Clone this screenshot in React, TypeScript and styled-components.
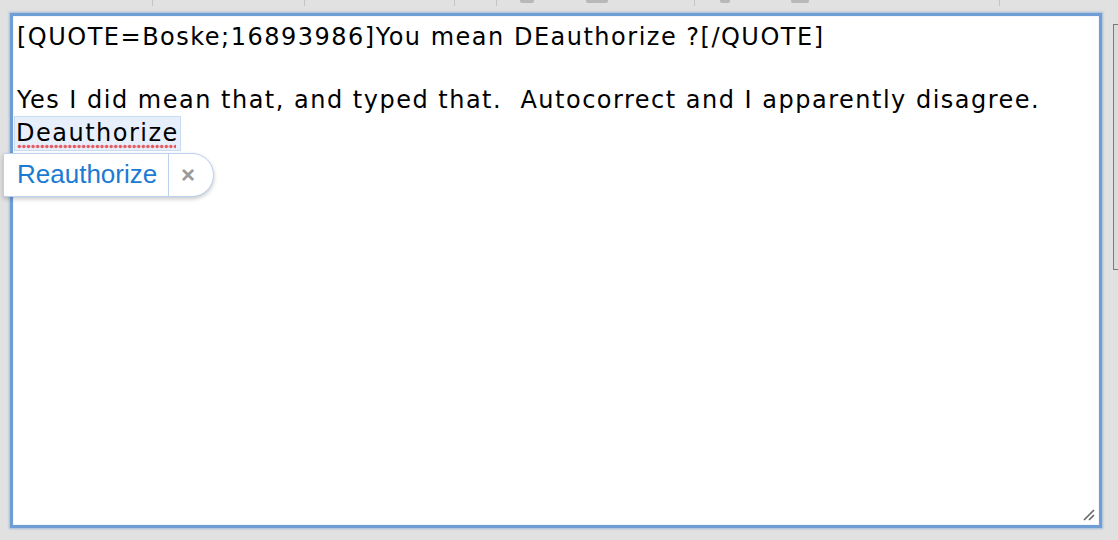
import React from "react";
import styled, { createGlobalStyle } from "styled-components";

const Global = createGlobalStyle`
  html, body { margin: 0; padding: 0; background: #e1e1e1; }
  body { width: 1118px; height: 540px; overflow: hidden; }
`;

const Page = styled.div`
  position: relative;
  width: 1118px;
  height: 540px;
  background: #e1e1e1;
  display: flex;
  flex-direction: column;
`;

const ToolbarStrip = styled.div`
  height: 8px;
  display: flex;
  align-items: flex-start;
`;

const Segment = styled.div<{ $w: number; $sep?: boolean }>`
  width: ${(p) => p.$w}px;
  height: 6px;
  box-sizing: border-box;
  border-right: ${(p) => (p.$sep ? "1px solid #c4c4c4" : "none")};
  display: flex;
  justify-content: center;
`;

const Stub = styled.span<{ $w: number }>`
  width: ${(p) => p.$w}px;
  height: 3px;
  background: #b8b8b8;
  border-radius: 0 0 2px 2px;
`;

const Body = styled.div`
  display: flex;
  padding: 5px 0 0 10px;
  gap: 11px;
`;

const Editor = styled.div`
  position: relative;
  box-sizing: border-box;
  width: 1093px;
  height: 515px;
  background: #fff;
  border: 3px solid #6e9ed4;
  box-shadow: 0 0 2px 1px rgba(110, 158, 212, 0.55), inset 0 0 1px rgba(60, 110, 170, 0.6);
  padding: 6px 0 0 4px;
  font-family: "DejaVu Sans", Verdana, sans-serif;
  font-size: 24px;
  letter-spacing: 1.5px;
  line-height: 31.5px;
  color: #000;
`;

const Line = styled.div`
  white-space: pre;
  height: 31.5px;
`;

const Misspelled = styled.span`
  position: relative;
  display: inline-block;
  background: #e6effb;
  outline: 1px solid #c9dbf1;
  padding: 0 1px 1px 1px;
  margin-left: -2px;
  line-height: 32px;
  &::after {
    content: "";
    position: absolute;
    left: 2px;
    right: 4px;
    bottom: 1px;
    height: 5px;
    background-image: radial-gradient(circle at 2.3px 2.5px, #e5585e 0, #e5585e 1.2px, rgba(229, 88, 94, 0.5) 1.7px, transparent 2.2px);
    background-size: 4.6px 5px;
    background-repeat: repeat-x;
  }
`;

const Popup = styled.div`
  position: absolute;
  left: 3px;
  top: 153px;
  height: 44px;
  box-sizing: border-box;
  display: flex;
  align-items: stretch;
  background: #fff;
  border: 1.5px solid #bcd0ef;
  border-radius: 2px 22px 22px 2px;
  box-shadow: 0 2px 4px rgba(0, 0, 0, 0.22);
  font-family: "Liberation Sans", Arial, sans-serif;
`;

const Suggestion = styled.div`
  display: flex;
  align-items: center;
  width: 165px;
  box-sizing: border-box;
  padding: 0 0 1px 13px;
  font-size: 26px;
  color: #1b7bd3;
  border-right: 1.5px solid #bcd0ef;
`;

const Close = styled.div`
  display: flex;
  align-items: center;
  justify-content: center;
  width: 44px;
  padding-right: 6px;
  box-sizing: border-box;
  font-size: 24px;
  font-weight: bold;
  color: #9a9a9a;
`;

const Grip = styled.svg`
  position: absolute;
  right: 3px;
  bottom: 3px;
`;

const Scrollbar = styled.div`
  margin-top: 11px;
  width: 4px;
  height: 244px;
  border: 1px solid #7a7a7a;
  border-right: none;
  background: #dcdcdc;
`;

const toolbar: { w: number; stub?: number }[] = [
  { w: 153 },
  { w: 152 },
  { w: 150 },
  { w: 42 },
  { w: 60, stub: 14 },
  { w: 80, stub: 22 },
  { w: 58 },
  { w: 60, stub: 10 },
  { w: 90, stub: 18 },
  { w: 155 },
];

export default function App() {
  return (
    <>
      <Global />
      <Page>
        <ToolbarStrip>
          {toolbar.map((t, i) => (
            <Segment key={i} $w={t.w} $sep={!t.stub}>
              {t.stub ? <Stub $w={t.stub} /> : null}
            </Segment>
          ))}
        </ToolbarStrip>
        <Body>
          <Editor>
            <Line>[QUOTE=Boske;16893986]You mean DEauthorize ?[/QUOTE]</Line>
            <Line> </Line>
            <Line>Yes I did mean that, and typed that.  Autocorrect and I apparently disagree.</Line>
            <Line>
              <Misspelled>Deauthorize</Misspelled>
            </Line>
            <Grip width="14" height="14" viewBox="0 0 14 14">
              <path d="M2 12 L12 2 M7 12 L12 7" stroke="#666" strokeWidth="1.6" />
            </Grip>
          </Editor>
          <Scrollbar />
        </Body>
        <Popup>
          <Suggestion>Reauthorize</Suggestion>
          <Close>×</Close>
        </Popup>
      </Page>
    </>
  );
}
